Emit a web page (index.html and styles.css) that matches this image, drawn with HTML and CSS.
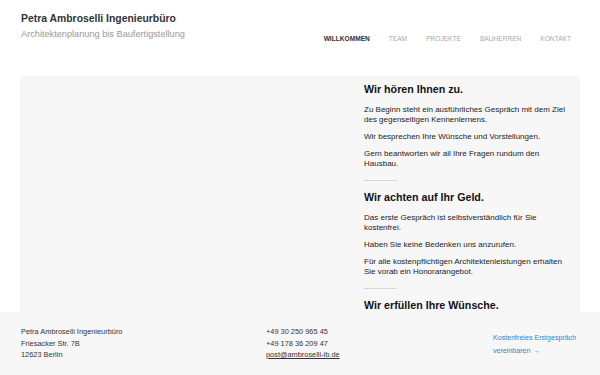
FILE: index.html
```html
<!DOCTYPE html>
<html lang="de">
<head>
<meta charset="utf-8">
<link rel="stylesheet" href="styles.css">
</head>
<body>
<header class="site-header">
  <div class="brand">
    <div class="brand-title">Petra Ambroselli Ingenieurbüro</div>
    <div class="brand-sub">Architektenplanung bis Baufertigstellung</div>
  </div>
  <nav class="nav">
    <a class="nav-item active">WILLKOMMEN</a>
    <a class="nav-item">TEAM</a>
    <a class="nav-item">PROJEKTE</a>
    <a class="nav-item">BAUHERREN</a>
    <a class="nav-item">KONTAKT</a>
  </nav>
</header>
<main class="content">
  <div class="media"></div>
  <div class="text">
    <h2>Wir hören Ihnen zu.</h2>
    <p>Zu Beginn steht ein ausführliches Gespräch mit dem Ziel des gegenseitigen Kennenlernens.</p>
    <p>Wir besprechen Ihre Wünsche und Vorstellungen.</p>
    <p>Gern beantworten wir all Ihre Fragen rundum den Hausbau.</p>
    <hr class="sep">
    <h2>Wir achten auf Ihr Geld.</h2>
    <p>Das erste Gespräch ist selbstverständlich für Sie kostenfrei.</p>
    <p>Haben Sie keine Bedenken uns anzurufen.</p>
    <p>Für alle kostenpflichtigen Architektenleistungen erhalten Sie vorab ein Honorarangebot.</p>
    <hr class="sep">
    <h2>Wir erfüllen Ihre Wünsche.</h2>
    <p>Gemeinsam mit Ihnen entwickeln wir Ihr Haus.</p>
  </div>
</main>
<footer class="footer">
  <div class="f-col">
    <div>Petra Ambroselli Ingenieurbüro</div>
    <div>Friesacker Str. 7B</div>
    <div>12623 Berlin</div>
  </div>
  <div class="f-col">
    <div>+49 30 250 965 45</div>
    <div>+49 178 36 209 47</div>
    <div><a class="mail">post@ambroselli-ib.de</a></div>
  </div>
  <div class="f-cta">
    <a class="cta-link">Kostenfreies Erstgespräch vereinbaren →</a>
  </div>
</footer>
</body>
</html>
```
FILE: styles.css
```css
html, body {
  margin: 0;
  padding: 0;
  background: #fff;
  font-family: "Liberation Sans", Arial, sans-serif;
  color: #222;
  overflow: hidden;
  height: 375px;
}
.site-header {
  display: flex;
  justify-content: space-between;
  align-items: flex-start;
  padding: 12px 29px 0 21px;
  height: 64px;
}
.brand-title {
  font-size: 10.4px;
  font-weight: bold;
  color: #333;
  line-height: 13px;
}
.brand-sub {
  margin-top: 3px;
  font-size: 9.2px;
  color: #999;
  line-height: 12px;
}
.nav {
  display: flex;
  gap: 19px;
  margin-top: 22px;
}
.nav-item {
  font-size: 6.6px;
  color: #aaa;
  line-height: 10px;
}
.nav-item.active {
  color: #333;
  font-weight: bold;
}
.content {
  margin: 0 20px;
  background: #f8f7f7;
  display: grid;
  grid-template-columns: 1fr 206px;
  column-gap: 10px;
  padding: 0 10px 40px 0;
}
.text {
  padding-top: 6px;
}
.text h2 {
  font-size: 10.7px;
  font-weight: bold;
  color: #111;
  margin: 0 0 9px 0;
  line-height: 14px;
}
.text p {
  font-size: 8px;
  line-height: 10px;
  margin: 0 0 7px 0;
  color: #222;
}
.sep {
  border: 0;
  border-top: 1px solid #d8d8d8;
  width: 33px;
  margin: 11px 0 9px 0;
}
.footer {
  position: fixed;
  left: 0;
  right: 0;
  bottom: 0;
  height: 63px;
  background: #f7f7f7;
  display: grid;
  grid-template-columns: 245px 227px 1fr;
  padding: 14px 0 0 21px;
  box-sizing: border-box;
  font-size: 7.4px;
  line-height: 11.5px;
  color: #333;
}
.mail {
  text-decoration: underline;
  color: #333;
}
.f-cta {
  font-size: 7.1px;
  line-height: 13px;
  padding-top: 6px;
  width: 100px;
}
.cta-link {
  display: block;
  color: #3b82c4;
}
```
